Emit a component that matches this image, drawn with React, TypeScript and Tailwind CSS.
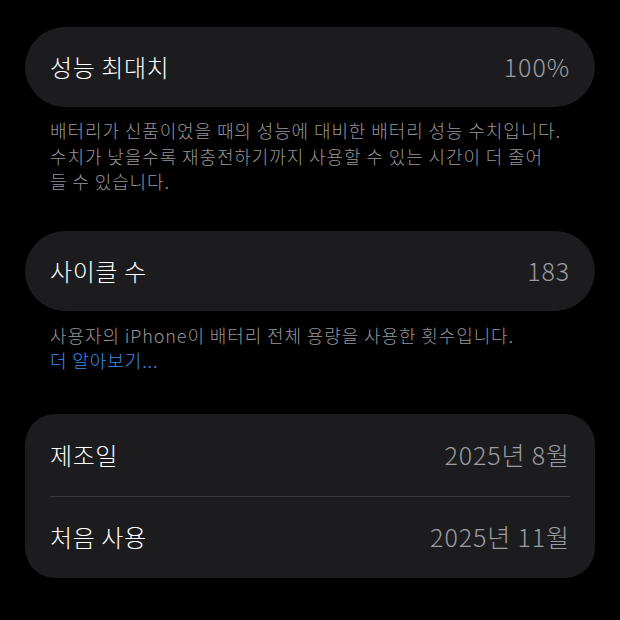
import React from "react";

// Battery health screen (dark mode settings style)
type Row = { label: string; value: string };

const font = { fontFamily: '"Noto Sans CJK KR", "Noto Sans", sans-serif' };

function PillRow({ label, value }: Row) {
  return (
    <div className="flex h-[80px] items-center justify-between rounded-[40px] bg-[#1c1c1e] px-[25px]">
      <span className="text-[24px] font-light tracking-[0.6px] text-white">{label}</span>
      <span className="text-[25px] font-light tracking-[0.9px] text-[#9c9ca1]">{value}</span>
    </div>
  );
}

export default function App() {
  const dates: Row[] = [
    { label: "제조일", value: "2025년 8월" },
    { label: "처음 사용", value: "2025년 11월" },
  ];

  return (
    <main className="min-h-screen w-[620px] bg-black px-[25px] pt-[27px]" style={font}>
      <PillRow label="성능 최대치" value="100%" />
      <p className="mt-[11px] px-[25px] text-[18px] font-light leading-[25.5px] tracking-[0.9px] text-[#96969b]">
        배터리가 신품이었을 때의 성능에 대비한 배터리 성능 수치입니다.
        <br />
        수치가 낮을수록 재충전하기까지 사용할 수 있는 시간이 더 줄어
        <br />
        들 수 있습니다.
      </p>

      <div className="mt-[36px]">
        <PillRow label="사이클 수" value="183" />
      </div>
      <p className="mt-[12px] px-[25px] text-[18px] font-light leading-[25.5px] tracking-[0.9px] text-[#96969b]">
        사용자의 iPhone이 배터리 전체 용량을 사용한 횟수입니다.
        <br />
        <span className="text-[#3b8ef0]">더 알아보기...</span>
      </p>

      <div className="mt-[40px] rounded-[30px] bg-[#1c1c1e] px-[25px]">
        {dates.map((d, i) => (
          <div
            key={d.label}
            className={`flex h-[82px] items-center justify-between ${i > 0 ? "border-t border-[#38383a]" : ""}`}
          >
            <span className="text-[24px] font-light tracking-[0.6px] text-white">{d.label}</span>
            <span className="text-[25px] font-light tracking-[0.9px] text-[#9c9ca1]">{d.value}</span>
          </div>
        ))}
      </div>
    </main>
  );
}
